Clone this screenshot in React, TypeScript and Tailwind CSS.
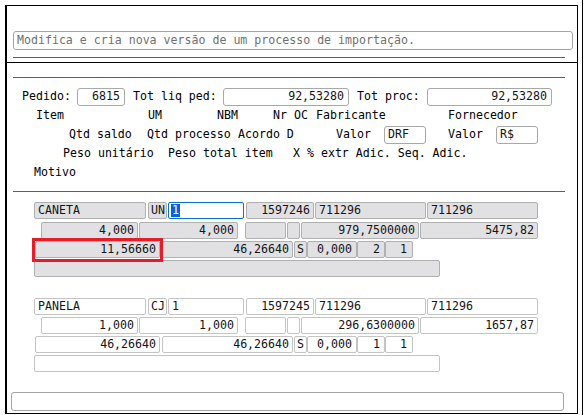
import React from 'react'

const mono = "font-['DejaVu_Sans_Mono','Liberation_Mono',monospace]"

type CellProps = {
  className: string
  children?: React.ReactNode
  left?: boolean
  light?: boolean
}

const Cell = ({ className, children, left = false, light = false }: CellProps) => (
  <div
    className={`flex h-[17px] shrink-0 items-center overflow-hidden rounded-[2px] border px-[3px] text-[11.6px] leading-none text-[#141414] ${
      light ? 'border-[#c4c4c4] bg-white' : 'border-[#b0b0b0] bg-[#e1e1e4]'
    } ${left ? 'justify-start' : 'justify-end'} ${className}`}
  >
    {children}
  </div>
)

const Field = ({ className, children, left = false }: CellProps) => (
  <div
    className={`flex h-[18px] shrink-0 items-center rounded-[3px] border border-[#a8a8a8] bg-white text-[11.6px] leading-none text-[#141414] ${
      left ? 'justify-start pl-[3px]' : 'justify-end pr-[4px]'
    } ${className}`}
  >
    {children}
  </div>
)

type Item = {
  name: string
  um: string
  seq: string
  nbm: string
  oc: string
  fab: string
  saldo: string
  proc: string
  valor: string
  total: string
  peso: string
  pesoTotal: string
  seqA: string
  adic: string
  light?: boolean
  focused?: boolean
}

const items: Item[] = [
  {
    name: 'CANETA',
    um: 'UN',
    seq: '1',
    nbm: '1597246',
    oc: '711296',
    fab: '711296',
    saldo: '4,000',
    proc: '4,000',
    valor: '979,7500000',
    total: '5475,82',
    peso: '11,56660',
    pesoTotal: '46,26640',
    seqA: '2',
    adic: '1',
    focused: true,
  },
  {
    name: 'PANELA',
    um: 'CJ',
    seq: '1',
    nbm: '1597245',
    oc: '711296',
    fab: '711296',
    saldo: '1,000',
    proc: '1,000',
    valor: '296,6300000',
    total: '1657,87',
    peso: '46,26640',
    pesoTotal: '46,26640',
    seqA: '1',
    adic: '1',
    light: true,
  },
]

const ItemBlock = ({ item, first }: { item: Item; first: boolean }) => {
  const l = item.light
  return (
    <div className={first ? 'mt-[10px]' : 'mt-[21px]'}>
      <div className="flex">
        <Cell light={l} left className="ml-[27px] w-[112px]">
          {item.name}
        </Cell>
        <Cell light={l} left className="ml-[2px] w-[19px] !px-[2px]">
          {item.um}
        </Cell>
        {item.focused ? (
          <div className="ml-[1px] flex h-[17px] w-[76px] shrink-0 items-center rounded-[2px] border border-[#0a6fd0] bg-white pl-[2px] text-[11.6px] leading-none">
            <span className="flex h-[13px] items-center bg-[#0a64d6] px-px text-white">{item.seq}</span>
          </div>
        ) : (
          <Cell light={l} left className="ml-[1px] w-[76px]">
            {item.seq}
          </Cell>
        )}
        <Cell light={l} className="ml-[2px] w-[68px]">
          {item.nbm}
        </Cell>
        <Cell light={l} left className="ml-[1px] w-[111px]">
          {item.oc}
        </Cell>
        <Cell light={l} left className="ml-[1px] w-[111px]">
          {item.fab}
        </Cell>
      </div>
      <div className={`flex ${first ? 'mt-[3px]' : 'mt-[2px]'}`}>
        <Cell light={l} className="ml-[34px] w-[97px]">
          {item.saldo}
        </Cell>
        <Cell light={l} className="ml-[1px] w-[99px]">
          {item.proc}
        </Cell>
        <Cell light={l} className="ml-[7px] w-[41px]" />
        <Cell light={l} className="ml-[1px] w-[13px]" />
        <Cell light={l} className="ml-[1px] w-[118px]">
          {item.valor}
        </Cell>
        <Cell light={l} className="ml-[1px] w-[118px]">
          {item.total}
        </Cell>
      </div>
      <div className="mt-[2px] flex">
        <div className="relative ml-[28px] shrink-0">
          <Cell light={l} className="w-[125px]">
            {item.peso}
          </Cell>
          {item.focused && (
            <div className="absolute -top-[3px] -right-[3px] -bottom-[4px] -left-[3px] border-[3px] border-[#e31e2a]" />
          )}
        </div>
        <Cell light={l} className="ml-[2px] w-[131px]">
          {item.pesoTotal}
        </Cell>
        <Cell light={l} left className="ml-[1px] w-[13px] !px-[2px]">
          S
        </Cell>
        <Cell light={l} className="w-[50px] !pr-[4px]">
          0,000
        </Cell>
        <Cell light={l} className="w-[28px] !pr-[4px]">
          {item.seqA}
        </Cell>
        <Cell light={l} className="w-[28px] !pr-[5px]">
          {item.adic}
        </Cell>
      </div>
      <div className="mt-[2px] flex">
        <Cell light={l} className="ml-[27px] w-[406px]" />
      </div>
    </div>
  )
}

export default function App() {
  return (
    <div className={`flex h-[415px] w-[585px] overflow-hidden bg-white text-black ${mono}`}>
      <div className="w-[5px] shrink-0" />
      <div className="mt-[5px] flex h-[409px] w-[573px] shrink-0 flex-col border-t border-r border-b border-l-2 border-black">
        {/* cabeçalho */}
        <div className="h-[57px] shrink-0 border-b border-black">
          <div className="mt-[25px] ml-[6px] flex h-[19px] w-[560px] items-center rounded-[3px] border border-[#a4a4a4] pl-[3px] text-[11.6px] text-[#707070]">
            Modifica e cria nova versão de um processo de importação.
          </div>
          <div className="mt-[7px] ml-[6px] h-px w-[552px] bg-[#e3262e]" />
        </div>

        <div className="flex-1 text-[11.6px] leading-none">
          <div className="mt-[14px] ml-[6px] h-px w-[552px] bg-[#e3262e]" />

          <div className="mt-[10px] flex h-[18px] items-center">
            <span className="ml-[15px] w-[55px] shrink-0">Pedido:</span>
            <Field className="w-[48px]">6815</Field>
            <span className="ml-[8px] w-[90px] shrink-0">Tot liq ped:</span>
            <Field className="w-[126px]">92,53280</Field>
            <span className="ml-[8px] w-[70px] shrink-0">Tot proc:</span>
            <Field className="w-[125px]">92,53280</Field>
          </div>

          <div className="flex h-[19px] items-center">
            <span className="ml-[29px] w-[112px] shrink-0">Item</span>
            <span className="w-[69px] shrink-0">UM</span>
            <span className="w-[56px] shrink-0">NBM</span>
            <span className="w-[43px] shrink-0">Nr OC</span>
            <span className="w-[132px] shrink-0">Fabricante</span>
            <span>Fornecedor</span>
          </div>

          <div className="flex h-[19px] items-center">
            <span className="ml-[62px] w-[78px] shrink-0">Qtd saldo</span>
            <span className="w-[91px] shrink-0">Qtd processo</span>
            <span className="w-[98px] shrink-0">Acordo D</span>
            <span className="w-[48px] shrink-0">Valor</span>
            <Field left className="w-[42px]">DRF</Field>
            <span className="ml-[22px] w-[48px] shrink-0">Valor</span>
            <Field left className="w-[42px]">R$</Field>
          </div>

          <div className="flex h-[19px] items-center">
            <span className="ml-[56px] w-[105px] shrink-0">Peso unitário</span>
            <span className="w-[125px] shrink-0">Peso total item</span>
            <span>X % extr Adic. Seq. Adic.</span>
          </div>

          <div className="flex h-[19px] items-center">
            <span className="ml-[27px]">Motivo</span>
          </div>

          <div className="mt-[9px] ml-[6px] h-px w-[552px] bg-[#e3262e]" />

          {items.map((item, i) => (
            <ItemBlock key={item.name} item={item} first={i === 0} />
          ))}

          <div className="mt-[20px] ml-[4px] h-[19px] w-[553px] rounded-[3px] border border-[#a4a4a4] bg-white" />
        </div>
      </div>
      <div className="w-[4px] shrink-0" />
      <div className="h-full w-px shrink-0 bg-black" />
    </div>
  )
}
